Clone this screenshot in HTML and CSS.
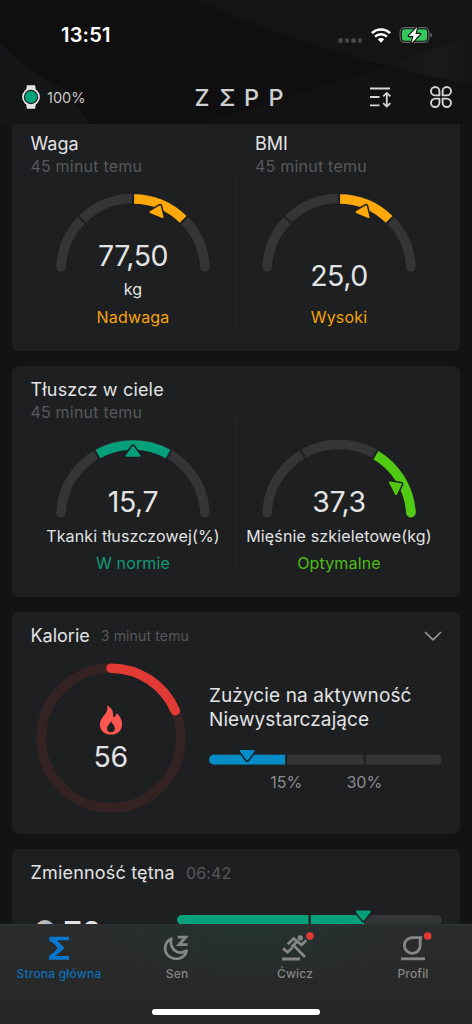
FILE: index.html
```html
<!DOCTYPE html>
<html lang="pl">
<head>
<meta charset="utf-8">
<title>Zepp</title>
<link rel="stylesheet" href="styles.css">
</head>
<body>
<div class="app">
  <svg class="backdrop" width="472" height="124" viewBox="0 0 472 124">
    <defs>
      <linearGradient id="beam" x1="0" y1="0" x2="1" y2="0"><stop offset="0" stop-color="#141415"/><stop offset="0.6" stop-color="#191a1c"/><stop offset="1" stop-color="#141415"/></linearGradient>
    </defs>
    <path d="M0 42C18 62 40 78 66 90L90 124H0Z" fill="#141516"/>
    <path d="M195 0Q290 42 388 66L472 34V0Z" fill="#141414"/>
    <path d="M388 66L472 34V86Z" fill="url(#beam)"/>
    <path d="M388 66L472 86V124H200L300 93Z" fill="#121212"/>
  </svg>

  <header class="header">
    <div class="status">
      <span class="time">13:51</span>
      <div class="signals">
        <span class="cell"><i></i><i></i><i></i><i></i></span>
        <svg class="wifi" width="20" height="15" viewBox="0 0 20 15">
          <g fill="none" stroke="#fff" stroke-width="2.5"><path d="M.9 5.1a13 13 0 0 1 18.2 0"/><path d="M4.1 8.6a8.4 8.4 0 0 1 11.8 0"/></g>
          <path d="M6.8 11.3a4.6 4.6 0 0 1 6.4 0L10 14.7Z" fill="#fff"/>
        </svg>
        <svg class="battery" width="34" height="18" viewBox="0 0 34 18">
          <rect x="1.1" y="1.6" width="28.8" height="14.8" rx="4.6" fill="none" stroke="#666" stroke-width="1.1"/>
          <rect x="2.9" y="3.3" width="25.2" height="11.4" rx="3" fill="#34c759"/>
          <path d="M31.3 6.8q1.6.6 1.6 2.2t-1.6 2.2Z" fill="#777"/>
          <path d="M18.2 1 9.8 10h4.6L12.7 17 21.2 8h-4.7Z" fill="#fff" stroke="#151515" stroke-width="2.4" paint-order="stroke" stroke-linejoin="round"/>
        </svg>
      </div>
    </div>
    <div class="toolbar">
      <div class="device">
        <svg width="20" height="26" viewBox="0 0 20 26">
          <path d="M5.200 6 5.900 1.200h8.200L14.800 6v14l-.7 4.800H5.900L5.200 20Z" fill="#e4e4e4"/>
          <circle cx="10" cy="13" r="8.900" fill="#e4e4e4"/>
          <circle cx="10" cy="13" r="6.600" fill="#02a47e" stroke="#222" stroke-width="1.200"/>
        </svg>
        <span>100%</span>
      </div>
      <div class="brand"><b>Z</b><b>Σ</b><b>P</b><b>P</b></div>
      <div class="tools">
        <svg width="24" height="24" viewBox="0 0 24 24" fill="none" stroke="#d6d6d6" stroke-width="1.8">
          <path d="M2 3.500h20M2 12h9.500M2 20.400h9.500M18.800 8.300v13"/>
          <path d="M15.200 11.300l3.600-3.400 3.600 3.400M15.200 18.200l3.600 3.400 3.600-3.400"/>
        </svg>
        <svg width="24" height="24" viewBox="0 0 24 24" fill="none" stroke="#d6d6d6" stroke-width="1.9" stroke-linejoin="round">
          <path d="M10.400 10.400H6.200a4.200 4.200 0 1 1 4.200-4.200Z"/>
          <path d="M13.600 10.400h4.200a4.200 4.200 0 1 0-4.200-4.200Z"/>
          <path d="M10.400 13.600H6.200a4.200 4.200 0 1 0 4.200 4.200Z"/>
          <path d="M13.600 13.600h4.200a4.200 4.200 0 1 1-4.200 4.200Z"/>
        </svg>
      </div>
    </div>
  </header>

  <main class="feed">
    <section class="card pair weight">
      <div class="half">
        <h2 class="title">Waga</h2>
        <p class="ago">45 minut temu</p>
        <div class="gauge">
          <svg width="160" height="90" viewBox="0 0 160 90">
            <path class="track" d="M8.1 75.7A72 72 0 0 1 151.9 75.7"/>
            <path class="arc orange" d="M80 8A72 72 0 0 1 130.9 29.1"/>
            <path class="gap" d="M34 34 24 24M80 1V15M126 34 136 24"/>
            <g transform="rotate(22.6 80 80)"><path class="halo" d="M80 10 73.5 18.8H86.5Z"/><path class="mark orange" d="M80 10 73.5 18.8H86.5Z"/></g>
          </svg>
          <span class="value">77,50</span>
        </div>
        <p class="label">kg</p>
        <p class="state c-orange">Nadwaga</p>
      </div>
      <div class="half">
        <h2 class="title indent">BMI</h2>
        <p class="ago indent">45 minut temu</p>
        <div class="gauge">
          <svg width="160" height="90" viewBox="0 0 160 90">
            <path class="track" d="M8.1 75.7A72 72 0 0 1 151.9 75.7"/>
            <path class="arc orange" d="M80 8A72 72 0 0 1 130.9 29.1"/>
            <path class="gap" d="M34 34 24 24M80 1V15M126 34 136 24"/>
            <g transform="rotate(22.6 80 80)"><path class="halo" d="M80 10 73.5 18.8H86.5Z"/><path class="mark orange" d="M80 10 73.5 18.8H86.5Z"/></g>
          </svg>
          <span class="value low">25,0</span>
        </div>
        <p class="label"></p>
        <p class="state c-orange">Wysoki</p>
      </div>
    </section>

    <section class="card pair fat">
      <div class="half">
        <h2 class="title wide">Tłuszcz w ciele</h2>
        <p class="ago">45 minut temu</p>
        <div class="gauge">
          <svg width="160" height="90" viewBox="0 0 160 90">
            <path class="track" d="M8.1 75.7A72 72 0 0 1 151.9 75.7"/>
            <path class="arc teal" d="M44 17.6A72 72 0 0 1 116 17.6"/>
            <path class="gap" d="M47.5 23.7 40.5 11.5M112.5 23.7 119.5 11.5"/>
            <path class="halo" d="M80 10 73.5 18.8H86.5Z"/><path class="mark teal" d="M80 10 73.5 18.8H86.5Z"/>
          </svg>
          <span class="value">15,7</span>
        </div>
        <p class="label">Tkanki tłuszczowej(%)</p>
        <p class="state c-teal">W normie</p>
      </div>
      <div class="half">
        <h2 class="title"></h2>
        <p class="ago"></p>
        <div class="gauge">
          <svg width="160" height="90" viewBox="0 0 160 90">
            <path class="track" d="M8.1 75.7A72 72 0 0 1 151.9 75.7"/>
            <path class="arc green" d="M116 17.6A72 72 0 0 1 151.9 75.7"/>
            <circle cx="151.9" cy="75.7" r="4.8" fill="#50ca12"/>
            <path class="gap" d="M47.5 23.7 40.5 11.5M112.5 23.7 119.5 11.5"/>
            <g transform="rotate(62 80 80)"><path class="halo" d="M80 10 73.5 18.8H86.5Z"/><path class="mark green" d="M80 10 73.5 18.8H86.5Z"/></g>
          </svg>
          <span class="value">37,3</span>
        </div>
        <p class="label">Mięśnie szkieletowe(kg)</p>
        <p class="state c-green">Optymalne</p>
      </div>
    </section>

    <section class="card calories">
      <div class="head">
        <h2 class="title">Kalorie</h2><span class="when">3 minut temu</span>
        <svg class="chevron" width="18" height="10" viewBox="0 0 18 10"><path d="M1 1l8 7.800L17 1" fill="none" stroke="#98999b" stroke-width="1.6"/></svg>
      </div>
      <div class="body">
        <div class="ring">
          <svg width="150" height="150" viewBox="0 0 150 150" fill="none" stroke-width="9.6">
            <circle cx="75" cy="75" r="69.8" stroke="#352324"/>
            <path d="M75 5.200A69.800 69.800 0 0 1 139.200 47.700" stroke="#e23b35" stroke-linecap="round"/>
          </svg>
          <div class="burn">
            <svg width="24" height="30" viewBox="0 0 24 30"><path fill-rule="evenodd" fill="#ff564f" d="M8.100.4C12.600 2.400 14.700 6 14.300 12.400C16.400 11.600 17.500 9.800 17.400 7.900C20.600 10.500 23.100 14.400 23.100 19.200C23.100 25.600 18.600 29.600 12 29.600C5.400 29.600.9 25.600.9 19.500C.9 15.500 3 13 5.400 10C7.700 7.100 9.200 4.300 8.100.4ZM12.100 15.700C11.200 18.900 8.100 20.400 8.100 23.700C8.100 25.900 9.700 27.200 12 27.200S15.900 25.900 15.900 23.700C15.900 20.400 13 18.900 12.100 15.700Z"/></svg>
            <span class="value">56</span>
          </div>
        </div>
        <div class="activity">
          <p>Zużycie na aktywność<br>Niewystarczające</p>
          <svg width="234" height="18" viewBox="0 0 234 18">
            <rect x="0" y="5.800" width="233" height="9.700" rx="4.850" fill="#343537"/>
            <path d="M4.850 5.800H76.300v9.700H4.850a4.850 4.850 0 0 1 0-9.700Z" fill="#028dc8"/>
            <path d="M77.300 5v11M155.600 5v11" stroke="#1e1f21" stroke-width="2"/>
            <path class="halo" d="M31.700 2H44.700L38.200 10.500Z"/><path d="M31.700 2H44.700L38.200 10.500Z" fill="#028dc8" stroke="#028dc8" stroke-width="2" stroke-linejoin="round"/>
          </svg>
          <div class="ticks"><span>15%</span><span>30%</span></div>
        </div>
      </div>
    </section>

    <section class="card pulse">
      <div class="head">
        <h2 class="title wide">Zmienność tętna</h2><span class="when clock">06:42</span>
      </div>
      <div class="row">
        <span class="orb"></span><span class="score">70</span>
        <svg class="bar" width="265" height="20" viewBox="0 0 265 20">
          <rect x="0" y="5" width="265" height="9.700" rx="4.850" fill="#343537"/>
          <path d="M4.850 5H187v9.700H4.850a4.850 4.850 0 0 1 0-9.700Z" fill="#049f7b"/>
          <path d="M132.600 4v12" stroke="#1e1f21" stroke-width="2.200"/>
          <path class="halo" d="M179.800 1.600H192.800L186.300 9.800Z"/><path class="mark teal" d="M179.800 1.600H192.800L186.300 9.800Z"/>
        </svg>
      </div>
    </section>
  </main>

  <nav class="tabs">
    <a class="tab active">
      <svg width="30" height="28" viewBox="0 0 30 28"><path fill="#0878cf" d="M5.300 2.700H25V6.200H13.200L19.800 13.600V14.800L11.500 21.900H25V25.700H5V21.500C8.500 19.800 11.300 17.300 13.500 14.200C11.300 10.900 8.700 8.500 5.300 6.800Z"/></svg>
      <span>Strona główna</span>
    </a>
    <a class="tab">
      <svg width="30" height="28" viewBox="0 0 30 28" fill="none" stroke="#858686" stroke-width="2.8">
        <path stroke-linejoin="round" d="M9.300 4.700C1.600 8.300 1.300 18 7.300 22.500C13.500 27 23.300 24.500 24.600 16.800C20 19.500 15 19 12 15.800C9.300 12.800 8.300 8.500 9.300 4.700Z"/>
        <path d="M15.700 3.100H23.800L17 10.600H25.700"/>
      </svg>
      <span>Sen</span>
    </a>
    <a class="tab">
      <svg width="30" height="28" viewBox="0 0 30 28" fill="none" stroke="#858686" stroke-width="2.8">
        <circle cx="20.300" cy="3.900" r="2.700" fill="#858686" stroke="none"/>
        <path d="M7.700 10.200 13.700 4.600 17.300 7.400 11.500 13M13.500 11.300 25 23M17 7.200 21.500 10.800 26.300 6.300M3.200 14.400 7.600 18.200 12.300 13.800M2 25H20"/>
        <circle cx="30" cy="2" r="3.800" fill="#e53935" stroke="none"/>
      </svg>
      <span>Ćwicz</span>
    </a>
    <a class="tab">
      <svg width="30" height="28" viewBox="0 0 30 28" fill="none" stroke="#858686" stroke-width="2.9">
        <path d="M22.600 3.600H14.500A7.900 7.900 0 1 0 22.200 11.500C22.200 8.500 22 6 22.600 3.600Z"/>
        <path d="M3 24.800H27"/>
        <circle cx="29.700" cy="2" r="3.800" fill="#e53935" stroke="none"/>
      </svg>
      <span>Profil</span>
    </a>
    <i class="home"></i>
  </nav>
</div>
</body>
</html>
```

FILE: styles.css
```css
* { box-sizing: border-box; margin: 0; padding: 0; }
body { background: #131313; font-family: Inter, "Noto Sans", sans-serif; color: #e3e3e4; }
svg { display: block; flex: none; overflow: visible; }
.app { position: relative; width: 472px; height: 1024px; display: flex; flex-direction: column; overflow: hidden; background: #131313; }
.backdrop { position: absolute; inset: 0 auto auto 0; background: #0f0f0f; }

.header { position: relative; height: 124px; flex: none; }
.status { height: 70px; padding: 0 39px 0 61px; display: flex; justify-content: space-between; align-items: center; }
.time { font-size: 20px; font-weight: 600; color: #fff; letter-spacing: 0.2px; }
.signals { display: flex; align-items: center; }
.cell { display: flex; gap: 2px; margin: 11px 9px 0 0; }
.cell i { width: 4.400px; height: 4.400px; border-radius: 50%; background: #464646; }
.wifi { margin-right: 8px; }
.toolbar { display: grid; grid-template-columns: 173.500px 1fr auto; align-items: center; height: 54px; padding: 0 19px 0 21px; }
.device { display: flex; align-items: center; gap: 6px; font-size: 14.500px; color: #c9c9c9; }
.brand { display: flex; align-items: center; color: #d0d0d0; padding-top: 1px; }
.brand b { width: 24.700px; font-size: 23.400px; font-weight: 500; line-height: 28px; }
.tools { display: flex; gap: 37px; }

.feed { position: relative; flex: 1; min-height: 0; overflow: hidden; padding: 0 12px; display: flex; flex-direction: column; gap: 14.800px; }
.card { background: #1e1f21; border-radius: 7px; flex: none; padding: 0 18px; }
.title { font-size: 18px; line-height: 22px; height: 22px; font-weight: 400; white-space: nowrap; color: #e3e3e4; padding-left: 0.500px; }
.wide { letter-spacing: 0.180px; }
.ago { font-size: 16px; line-height: 24px; height: 24px; color: #58595b; white-space: nowrap; letter-spacing: 0.220px; padding-left: 0.400px; }
.title.indent, .ago.indent { padding-left: 19px; }
.weight { height: 227px; padding-top: 9px; border-top-left-radius: 0; border-top-right-radius: 0; }
.weight .ago { margin-top: -1px; }
.fat { height: 231.500px; padding-top: 13px; }
.fat .ago { margin-top: -1px; }
.pair { display: grid; grid-template-columns: 206px 206px; background-image: linear-gradient(#26272a, #26272a); background-repeat: no-repeat; background-size: 1px 156px; background-position: 223.500px 48px; }
.fat { background-position-y: 51px; }
.gauge { display: grid; justify-items: center; align-items: start; height: 88.300px; margin-top: 12.500px; }
.fat .gauge { height: 88.600px; margin-top: 13.400px; }
.gauge > * { grid-area: 1 / 1; }
.gauge .value { margin-top: 48px; }
.gauge .low { margin-top: 68.500px; }
.value { font-size: 28.500px; line-height: 34px; font-weight: 400; letter-spacing: -0.450px; white-space: nowrap; }
.label, .state { font-size: 16px; line-height: 20px; height: 20px; text-align: center; white-space: nowrap; letter-spacing: 0.150px; }
.state { margin-top: 7.700px; }
.weight .state { margin-top: 8px; }
.c-orange { color: #f5a30c; }
.c-teal { color: #0e9a78; }
.c-green { color: #4ebd17; }
.track { fill: none; stroke: #343537; stroke-width: 9.600px; stroke-linecap: round; }
.arc { fill: none; stroke-width: 9.600px; }
.arc.orange { stroke: #ffa80a; }
.arc.teal { stroke: #049f7b; }
.arc.green { stroke: #50ca12; }
.gap { stroke: #1e1f21; stroke-width: 2.200px; }
.halo { fill: #1e1f21; stroke: #1e1f21; stroke-width: 5px; stroke-linejoin: round; }
.mark { stroke-width: 2px; stroke-linejoin: round; }
.mark.orange { fill: #ffa80a; stroke: #ffa80a; }
.mark.teal { fill: #049f7b; stroke: #049f7b; }
.mark.green { fill: #50ca12; stroke: #50ca12; }

.head { display: flex; align-items: center; height: 22px; }
.when { margin-left: 11px; font-size: 14px; line-height: 22px; color: #58595b; letter-spacing: 0.150px; }
.chevron { margin-left: auto; }
.calories { height: 222px; padding-top: 13px; }
.body { display: flex; margin-top: 15.600px; padding-left: 5.600px; }
.ring { display: grid; justify-items: center; width: 150px; height: 150px; }
.ring > * { grid-area: 1 / 1; }
.burn { display: flex; flex-direction: column; align-items: center; gap: 5.500px; padding-top: 42px; }
.activity { margin: 21.700px 0 0 23.400px; }
.activity p { font-size: 19px; line-height: 24px; letter-spacing: 0.100px; white-space: nowrap; }
.activity svg { margin-top: 16.800px; }
.ticks { display: flex; margin: 5px 0 0 38.300px; font-size: 16px; line-height: 20px; color: #8b8c8e; }
.ticks span { width: 78px; text-align: center; }

.pulse { height: 160px; padding-top: 13px; }
.clock { font-size: 16px; margin-left: 11px; }
.row { display: flex; align-items: flex-start; padding: 26.500px 0 0 4.500px; }
.orb { flex: none; width: 20px; height: 20px; margin-top: 9.500px; border-radius: 50%; background: linear-gradient(90deg, #e8bd84, #b8bdb9 50%, #77a7dc); }
.score { flex: none; width: 122.500px; padding-left: 9px; margin-top: 5px; font-size: 32px; line-height: 38px; font-weight: 500; }

.tabs { position: relative; flex: none; height: 100px; display: grid; grid-template-columns: repeat(4, 118px); padding-top: 9px; border-top: 1px solid #303333; background: radial-gradient(ellipse 150px 60px at 250px 0, #23332f, rgba(35, 51, 47, 0)), linear-gradient(#2a2d2d, #262626); }
.tab { display: flex; flex-direction: column; align-items: center; color: #858686; font-size: 12px; line-height: 16px; font-weight: 500; }
.tab svg { margin-top: -0.500px; }
.tab span { margin-top: 4.400px; letter-spacing: 0.200px; }
.tab.active { color: #0d6fb8; }
.home { position: absolute; left: 152px; top: 83.500px; width: 168px; height: 6.500px; border-radius: 4px; background: #fff; }
```
